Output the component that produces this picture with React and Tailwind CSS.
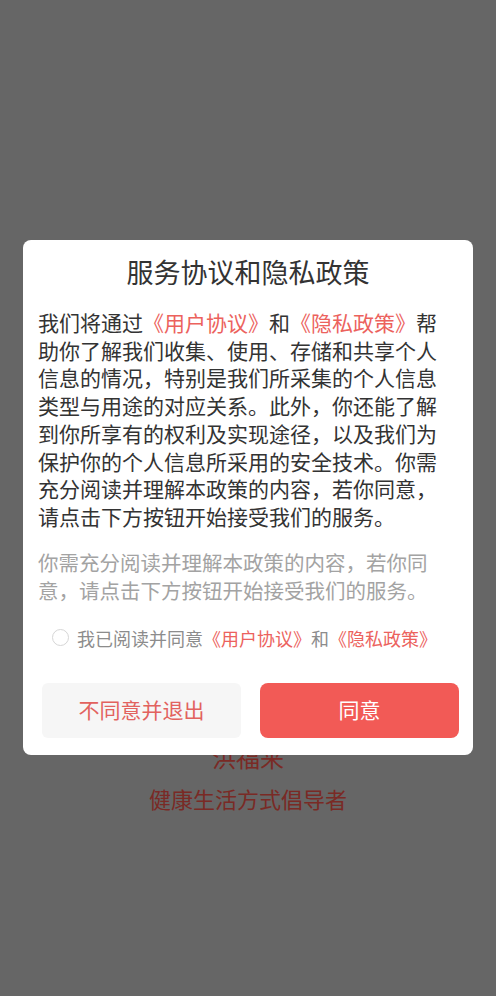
export default function App() {
  const font = { fontFamily: '"Noto Sans CJK SC", "Noto Sans", sans-serif' };
  return (
    <div className="relative h-[996px] w-[496px] overflow-hidden bg-[#666666]" style={font}>
      <div className="flex flex-col items-center pt-[742px]">
        <div className="text-[24px] leading-[30px] text-[#7a2a25]">洪福来</div>
        <div className="mt-[11px] text-[22px] leading-[30px] text-[#7a2a25]">健康生活方式倡导者</div>
      </div>

      <div className="absolute left-[23px] top-[240px] w-[450px] rounded-[8px] bg-white">
        <div className="pt-[16px] text-center text-[27px] leading-[32px] text-[#333333]">
          服务协议和隐私政策
        </div>
        <div className="mt-[21px] w-[420px] pl-[15px] pr-[0px]">
          <p className="w-[405px] text-[21px] leading-[27.7px] text-[#333333]">
            我们将通过<span className="text-[#ec625d]">《用户协议》</span>和<span className="text-[#ec625d]">《隐私政策》</span>帮助你了解我们收集、使用、存储和共享个人信息的情况，特别是我们所采集的个人信息类型与用途的对应关系。此外，你还能了解到你所享有的权利及实现途径，以及我们为保护你的个人信息所采用的安全技术。你需充分阅读并理解本政策的内容，若你同意，请点击下方按钮开始接受我们的服务。
          </p>
          <p className="mt-[17px] w-[405px] text-[20.5px] leading-[28.5px] text-[#a3a3a3]">
            你需充分阅读并理解本政策的内容，若你同意，请点击下方按钮开始接受我们的服务。
          </p>
        </div>
        <div className="mt-[21px] flex h-[24px] items-center pl-[29px]">
          <span className="h-[17px] w-[17px] rounded-full border-[1.5px] border-[#d6d6d6]" />
          <span className="ml-[8px] text-[18px] leading-[24px] text-[#8c8c8c]">
            我已阅读并同意<span className="text-[#ec625d]">《用户协议》</span>和<span className="text-[#ec625d]">《隐私政策》</span>
          </span>
        </div>
        <div className="mt-[33px] flex gap-[19px] pb-[17px] pl-[19px] pr-[14px]">
          <button className="flex h-[55px] flex-1 items-center justify-center rounded-[6px] bg-[#f6f6f6] text-[21px] text-[#e2625e]">
            不同意并退出
          </button>
          <button className="flex h-[55px] flex-1 items-center justify-center rounded-[8px] bg-[#f25a56] text-[21px] text-white">
            同意
          </button>
        </div>
      </div>
    </div>
  );
}
